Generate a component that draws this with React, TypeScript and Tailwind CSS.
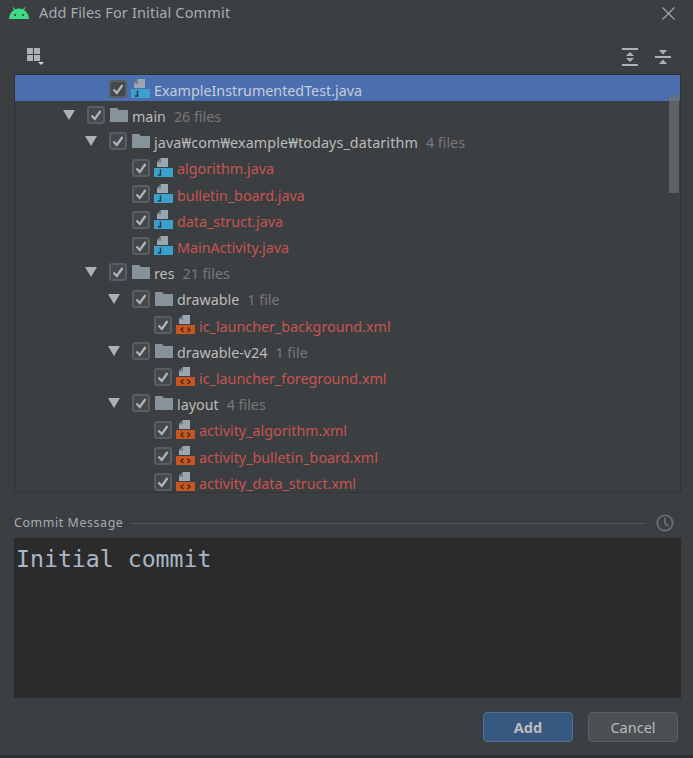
const rows: { indent: number; arrow?: boolean; icon: "folder" | "java" | "xml"; name: string; count?: string; red?: boolean; selected?: boolean }[] = [
  { indent: 94, icon: "java", name: "ExampleInstrumentedTest.java", selected: true },
  { indent: 72, arrow: true, icon: "folder", name: "main", count: "26 files" },
  { indent: 94, arrow: true, icon: "folder", name: "java₩com₩example₩todays_datarithm", count: "4 files" },
  { indent: 117, icon: "java", name: "algorithm.java", red: true },
  { indent: 117, icon: "java", name: "bulletin_board.java", red: true },
  { indent: 117, icon: "java", name: "data_struct.java", red: true },
  { indent: 117, icon: "java", name: "MainActivity.java", red: true },
  { indent: 94, arrow: true, icon: "folder", name: "res", count: "21 files" },
  { indent: 117, arrow: true, icon: "folder", name: "drawable", count: "1 file" },
  { indent: 139, icon: "xml", name: "ic_launcher_background.xml", red: true },
  { indent: 117, arrow: true, icon: "folder", name: "drawable-v24", count: "1 file" },
  { indent: 139, icon: "xml", name: "ic_launcher_foreground.xml", red: true },
  { indent: 117, arrow: true, icon: "folder", name: "layout", count: "4 files" },
  { indent: 139, icon: "xml", name: "activity_algorithm.xml", red: true },
  { indent: 139, icon: "xml", name: "activity_bulletin_board.xml", red: true },
  { indent: 139, icon: "xml", name: "activity_data_struct.xml", red: true },
];

function Arrow() {
  return (
    <svg width="12" height="10" viewBox="0 0 12 10" className="block">
      <path d="M0 0H12L6 10Z" fill="#afb1b3" />
    </svg>
  );
}

function Check() {
  return (
    <div className="flex h-[18px] w-[18px] items-center justify-center rounded-[3px] border-2 border-[#5b5e60] bg-[#43494a]">
      <svg width="14" height="14" viewBox="0 0 14 14">
        <path d="M2.5 7.5L5.8 11L11.5 3" fill="none" stroke="#b4b4b4" strokeWidth="2.2" />
      </svg>
    </div>
  );
}

function FileIcon({ type }: { type: "folder" | "java" | "xml" }) {
  if (type === "folder") {
    return (
      <svg width="18" height="14" viewBox="0 0 18 14" className="block">
        <path d="M0 0H7L9 2H18V14H0Z" fill="#87939a" />
      </svg>
    );
  }
  const java = type === "java";
  return (
    <svg width="19" height="20" viewBox="0 0 19 20" className="block">
      <path d="M7 0H14V9H3V4Z" fill="#9aa7b0" />
      <path d="M3 4.5H7V0.5" fill="#6e7a82" />
      <rect x="0" y="10" width="19" height="9" fill={java ? "#3d9fcb" : "#c7551f"} />
      {java ? (
        <path d="M6.5 11.5V17H3.8" fill="none" stroke="#1f3c4d" strokeWidth="1.5" />
      ) : (
        <path d="M7.5 12.5L5 14.7L7.5 17M11.5 12.5L14 14.7L11.5 17" fill="none" stroke="#3b2a20" strokeWidth="1.3" />
      )}
    </svg>
  );
}

function ExpandAll() {
  return (
    <svg width="16" height="18" viewBox="0 0 16 18" className="block">
      <rect x="0" y="0" width="16" height="2" fill="#afb1b3" />
      <rect x="0" y="16" width="16" height="2" fill="#afb1b3" />
      <path d="M8 4L12 8H4Z" fill="#afb1b3" />
      <path d="M8 14L12 10H4Z" fill="#afb1b3" />
    </svg>
  );
}

function CollapseAll() {
  return (
    <svg width="16" height="16" viewBox="0 0 16 16" className="block">
      <rect x="0" y="7" width="16" height="2" fill="#afb1b3" />
      <path d="M8 5.5L12 1H4Z" fill="#afb1b3" />
      <path d="M8 10.5L12 15H4Z" fill="#afb1b3" />
    </svg>
  );
}

export default function App() {
  return (
    <div className="flex h-[758px] w-[693px] flex-col bg-[#3c3f41] font-['Noto_Sans',sans-serif] text-[#bbbbbb]">
      {/* title bar */}
      <div className="flex h-[26px] shrink-0 items-center pl-[9px] pr-[18px]">
        <svg width="20" height="12" viewBox="0 0 20 12" className="block">
          <path d="M0 12C0.3 6 4.5 1.5 10 1.5S19.7 6 20 12Z" fill="#3ddc84" />
          <path d="M4 0.5L6.5 4M16 0.5L13.5 4" stroke="#3ddc84" strokeWidth="1.2" />
          <circle cx="6" cy="8" r="1.1" fill="#3c3f41" />
          <circle cx="14" cy="8" r="1.1" fill="#3c3f41" />
        </svg>
        <span className="ml-[10px] text-[14.5px] tracking-[0.15px] text-[#a4acb3]">Add Files For Initial Commit</span>
        <svg width="13" height="13" viewBox="0 0 13 13" className="ml-auto block">
          <path d="M0.5 0.5L12.5 12.5M12.5 0.5L0.5 12.5" stroke="#a9acae" strokeWidth="1.1" />
        </svg>
      </div>

      {/* toolbar */}
      <div className="flex h-[48px] shrink-0 items-center justify-between pl-[27px] pr-[22px] pt-[14px]">
        <svg width="18" height="18" viewBox="0 0 18 18" className="block">
          <rect x="0" y="0" width="6" height="6" fill="#afb1b3" />
          <rect x="7" y="0" width="6" height="6" fill="#afb1b3" />
          <rect x="0" y="7" width="6" height="6" fill="#afb1b3" />
          <rect x="7" y="7" width="6" height="6" fill="#afb1b3" />
          <path d="M11 14H17L14 17Z" fill="#d8d8d8" />
        </svg>
        <div className="flex items-center gap-[17px]">
          <ExpandAll />
          <CollapseAll />
        </div>
      </div>

      {/* changes tree */}
      <div className="relative ml-[14px] mr-[12px] h-[419px] shrink-0 overflow-hidden border border-[#2f3133] border-b-[#323537]">
        {rows.map((row) => (
          <div key={row.name} className={`relative flex h-[26.2px] items-center pt-[2px] ${row.selected ? "bg-[#4b6eaf]" : ""}`} style={{ paddingLeft: row.indent }}>
            {row.arrow && (
              <div className="absolute top-[9px]" style={{ left: row.indent - 24 }}>
                <Arrow />
              </div>
            )}
            <Check />
            <div className="ml-[4px] flex w-[19px] shrink-0 justify-center">
              <FileIcon type={row.icon} />
            </div>
            <span className={`ml-[4px] whitespace-nowrap pt-[3px] text-[14.3px] ${row.name.includes("₩") ? "tracking-[0.12px]" : ""} ${row.red ? "text-[#c75450]" : row.selected ? "text-[#c5cddb]" : "text-[#bbbbbb]"}`}>{row.name}</span>
            {row.count && <span className="ml-[8px] whitespace-nowrap pt-[3px] text-[14.3px] text-[#787878]">{row.count}</span>}
          </div>
        ))}
        {/* scrollbar thumb */}
        <div className="absolute right-[1px] top-[20px] h-[98px] w-[10px] bg-[#6f7072]/70" />
      </div>

      {/* commit message */}
      <div className="mt-[20px] flex h-[20px] shrink-0 items-center pl-[14px] pr-[18px]">
        <span className="text-[12.4px] tracking-[0.6px] text-[#a4acb3]">Commit Message</span>
        <div className="ml-[8px] h-px flex-1 bg-[#55585a]" />
        <svg width="20" height="20" viewBox="0 0 20 20" className="ml-[10px] block">
          <circle cx="10" cy="10" r="7.7" fill="none" stroke="#6e6e6e" strokeWidth="1.8" />
          <path d="M10 5V10.5L13.5 13" fill="none" stroke="#6e6e6e" strokeWidth="1.8" />
        </svg>
      </div>
      <div className="ml-[14px] mr-[12px] mt-[5px] h-[160px] shrink-0 bg-[#2b2b2b] pl-[2px] pt-[5px] font-['DejaVu_Sans_Mono',monospace] text-[23.2px] leading-[32px] text-[#a9b7c6]">
        Initial commit
      </div>

      {/* buttons */}
      <div className="mt-[14px] flex shrink-0 justify-end gap-[15px] pr-[15px]">
        <button className="h-[30px] w-[90px] rounded-[4px] border border-[#4c7199] bg-[#365880] pt-[1px] text-[14.5px] font-bold text-[#bbbbbb]">Add</button>
        <button className="h-[30px] w-[90px] rounded-[4px] border border-[#5e6060] bg-[#4c5052] pt-[1px] text-[14.5px] text-[#bbbbbb]">Cancel</button>
      </div>

      <div className="mt-auto h-[3px] shrink-0 bg-[#2b2d2e]" />
    </div>
  );
}
